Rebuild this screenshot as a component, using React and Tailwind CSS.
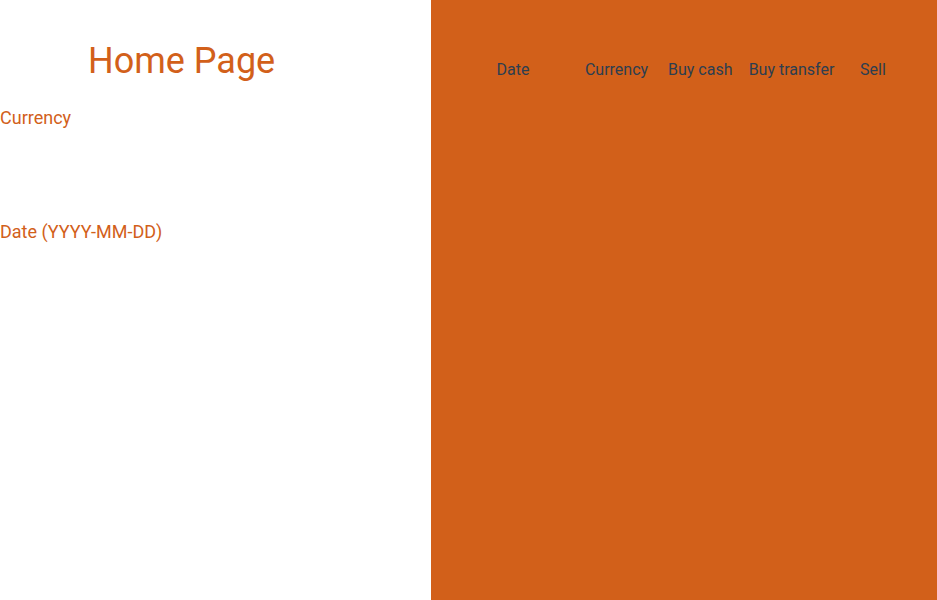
import React from "react";

const headers = [
  { label: "Date", w: "w-[104px]" },
  { label: "Currency", w: "w-[103px]" },
  { label: "Buy cash", w: "w-[64px]" },
  { label: "Buy transfer", w: "w-[119px]" },
  { label: "Sell", w: "w-[44px]" },
];

const App = () => {
  return (
    <div className="flex h-[600px] w-full font-['Roboto',sans-serif]">
      {/* Left side: search form */}
      <div className="w-[431px] shrink-0 bg-white text-[#d2601a]">
        <h1 className="ml-[88px] mt-[40px] text-[36px] leading-[42px] whitespace-nowrap">Home Page</h1>
        <div className="mt-[25px] text-[18px] leading-[21px]">Currency</div>
        <div className="mt-[93px] text-[18px] leading-[21px]">Date (YYYY-MM-DD)</div>
      </div>

      {/* Right side: rates table */}
      <div className="flex-1 bg-[#d2601a]">
        <div className="mt-[60px] flex pl-[30px] text-[16px] leading-[19px] text-[#2c3e50]">
          {headers.map((h) => (
            <div key={h.label} className={`${h.w} text-center whitespace-nowrap`}>
              {h.label}
            </div>
          ))}
        </div>
      </div>
    </div>
  );
};

export default App;
